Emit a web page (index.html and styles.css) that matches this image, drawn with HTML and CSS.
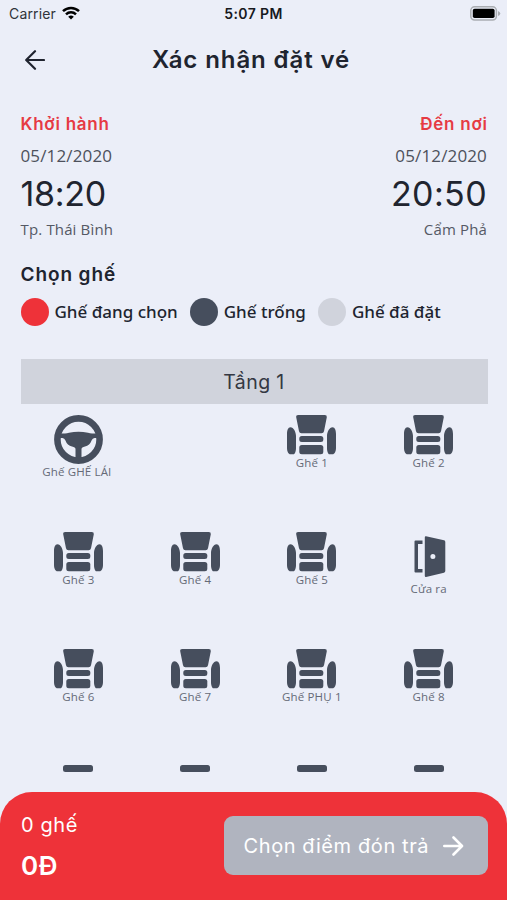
FILE: index.html
```html
<!DOCTYPE html>
<html lang="vi">
<head>
<meta charset="utf-8">
<title>Xác nhận đặt vé</title>
<link rel="stylesheet" href="styles.css">
</head>
<body>
<svg class="defs" width="0" height="0">
  <symbol id="seat" viewBox="0 0 49 40">
    <path d="M11.200 0h26.600q2.300 0 2 2.300L37 16.300q-.4 2-2.400 2H14.400q-2 0-2.400-2L9.200 2.300Q8.900 0 11.200 0z"/>
    <rect x="12.300" y="21" width="24" height="6" rx="2.500"/>
    <rect x="12.300" y="30" width="24" height="9.300" rx="2.500"/>
    <path d="M3.500 12.300C6.500 12.300 9 17 9 21v12c0 3-1 6.300-2.500 6.300H3.500C1.500 39.300 0 36.500 0 33V19c0-3.500 1-6.700 3.500-6.700zM45.500 12.300C42.500 12.300 40 17 40 21v12c0 3 1 6.300 2.500 6.300h3c2 0 3.500-2.800 3.500-6.300V19c0-3.500-1-6.700-3.500-6.700z"/>
  </symbol>
</svg>
<main class="screen">
  <div class="status">
    <div class="carrier"><span>Carrier</span>
      <svg width="18" height="14" viewBox="0 0 18 14" fill="none" stroke="#000" stroke-width="2.500"><path d="M1 5.200C5.500.8 12.500.8 17 5.200M4 8.300c2.800-2.700 7.200-2.700 10 0"/><path d="M9 13.500 6.200 10.700q2.800-2.400 5.600 0z" fill="#000" stroke="none"/></svg>
    </div>
    <div class="clock">5:07 PM</div>
    <svg class="battery" width="31" height="15" viewBox="0 0 31 15"><rect x=".8" y=".8" width="25.600" height="13.200" rx="3.800" fill="none" stroke="#aaadb2" stroke-width="1.500"/><rect x="2.800" y="2.800" width="21.800" height="9.200" rx="1.800"/><path d="M28 5v5q2.300-1 2.300-2.500T28 5z" fill="#aaadb2"/></svg>
  </div>
  <header class="header">
    <svg width="20" height="20" viewBox="0 0 20 20" fill="none" stroke="#20242f" stroke-width="2.200" stroke-linecap="round" stroke-linejoin="round"><path d="M19 10H1.500M10 1.200 1.200 10l8.800 8.800"/></svg>
    <h1>Xác nhận đặt vé</h1>
  </header>
  <section class="trip">
    <div class="stop">
      <div class="stop-title">Khởi hành</div>
      <div class="date">05/12/2020</div>
      <div class="time depart">18:20</div>
      <div class="place">Tp. Thái Bình</div>
    </div>
    <div class="stop right">
      <div class="stop-title">Đến nơi</div>
      <div class="date">05/12/2020</div>
      <div class="time">20:50</div>
      <div class="place">Cẩm Phả</div>
    </div>
  </section>
  <h2>Chọn ghế</h2>
  <div class="legend">
    <div class="key"><i class="dot picked"></i>Ghế đang chọn</div>
    <div class="key"><i class="dot free"></i>Ghế trống</div>
    <div class="key"><i class="dot booked"></i>Ghế đã đặt</div>
  </div>
  <div class="floor"><span>Tầng 1</span></div>
  <div class="seats">
    <div class="cell">
      <svg width="49" height="49" viewBox="0 0 49 49"><circle cx="24.500" cy="24.500" r="21.100" fill="none" stroke="#464e5d" stroke-width="6.600"/><path d="M4 18.500h7q2-.2 4-.8 9.500-2 19 0 2 .6 4 .8h7V23h-4.500q-2 .2-2.800 2.200-2 5.300-6.700 6.400-3.500.8-3.500 2.400v9h-6v-9q0-1.600-3.500-2.400-4.700-1.100-6.700-6.400-.8-2-2.800-2.200H4z"/></svg>
      <span class="wide-label">Ghế GHẾ LÁI</span>
    </div>
    <div class="cell"></div>
    <div class="cell"><svg width="49" height="40"><use href="#seat"/></svg><span>Ghế 1</span></div>
    <div class="cell"><svg width="49" height="40"><use href="#seat"/></svg><span>Ghế 2</span></div>
    <div class="cell"><svg width="49" height="40"><use href="#seat"/></svg><span>Ghế 3</span></div>
    <div class="cell"><svg width="49" height="40"><use href="#seat"/></svg><span>Ghế 4</span></div>
    <div class="cell"><svg width="49" height="40"><use href="#seat"/></svg><span>Ghế 5</span></div>
    <div class="cell">
      <svg width="49" height="49" viewBox="0 0 49 49"><path d="M18.500 8.500h-7q-1 0-1 1v30q0 1 1 1h7V37H14V12h4.500z"/><path fill-rule="evenodd" d="M22 4.200 40 8.300q1.300.3 1.300 1.700v29q0 1.400-1.300 1.700L22 45q-1.200.2-1.200-1.200V5.400Q20.800 4 22 4.200zM28.900 22a2.500 2.500 0 1 0 0 5 2.500 2.500 0 0 0 0-5z"/></svg>
      <span>Cửa ra</span>
    </div>
    <div class="cell"><svg width="49" height="40"><use href="#seat"/></svg><span>Ghế 6</span></div>
    <div class="cell"><svg width="49" height="40"><use href="#seat"/></svg><span>Ghế 7</span></div>
    <div class="cell"><svg width="49" height="40"><use href="#seat"/></svg><span>Ghế PHỤ 1</span></div>
    <div class="cell"><svg width="49" height="40"><use href="#seat"/></svg><span>Ghế 8</span></div>
    <div class="cell"><i class="edge"></i></div>
    <div class="cell"><i class="edge"></i></div>
    <div class="cell"><i class="edge"></i></div>
    <div class="cell"><i class="edge"></i></div>
  </div>
  <footer class="footer">
    <div class="summary">
      <div class="count">0 ghế</div>
      <div class="total">0Đ</div>
    </div>
    <button class="next"><span>Chọn điểm đón trả</span>
      <svg width="21" height="20" viewBox="0 0 21 20" fill="none" stroke="#fff" stroke-width="2.600" stroke-linecap="round" stroke-linejoin="round"><path d="M1.300 10h17.500M10.500 1.500 19 10l-8.500 8.500"/></svg>
    </button>
  </footer>
</main>
</body>
</html>
```
FILE: styles.css
```css
* { box-sizing: border-box; }
body { margin: 0; background: #ebeef8; color: #20242f; font-family: Inter, "Noto Sans", sans-serif; }
.defs { display: block; height: 0; }
.screen { width: 507px; height: 900px; display: flex; flex-direction: column; overflow: hidden; }
.status { height: 28px; flex: none; padding: 0 6px 0 9px; display: grid; grid-template-columns: 1fr auto 1fr; align-items: center; color: #17191e; font-size: 14px; line-height: 28px; }
.carrier { display: flex; align-items: center; gap: 6px; color: #30333a; letter-spacing: .15px; }
.carrier svg { margin-top: -2px; }
.clock { margin-right: 3px; font-weight: 600; letter-spacing: .4px; }
.battery { justify-self: end; margin-top: -2px; }
.header { height: 63px; flex: none; padding: 0 25px; display: grid; grid-template-columns: 20px 1fr 20px; align-items: center; }
h1 { margin: 0 0 0 -5px; text-align: center; font-size: 24px; line-height: 30px; font-weight: 600; letter-spacing: .9px; }
.trip { flex: none; display: flex; justify-content: space-between; padding: 22px 20px 0 20.500px; }
.stop { display: flex; flex-direction: column; align-items: flex-start; }
.right { align-items: flex-end; }
.stop-title { margin-right: -.7px; color: #e63a43; font-size: 17px; line-height: 22px; font-weight: 600; letter-spacing: .75px; }
.date { margin-top: 10px; color: #4d515c; font: 17px/22px "Open Sans", "Noto Sans", sans-serif; letter-spacing: .15px; }
.time { margin-top: 6px; font-size: 34px; line-height: 42px; letter-spacing: .4px; }
.depart { letter-spacing: -.3px; }
.place { margin-top: 4px; color: #555965; font: 15px/20px "Open Sans", "Noto Sans", sans-serif; letter-spacing: .15px; }
h2 { flex: none; margin: 24px 20px 0 20.500px; font-size: 19px; line-height: 24px; font-weight: 600; letter-spacing: .9px; }
.legend { flex: none; margin: 10px 20px 0 20.500px; height: 30px; display: flex; align-items: center; gap: 12px; font: 500 17px/30px "Noto Sans", sans-serif; }
.key { display: flex; align-items: center; gap: 6px; white-space: nowrap; }
.dot { width: 28px; height: 28px; border-radius: 50%; }
.picked { background: #ee3239; }
.free { background: #464e5d; }
.booked { background: #d0d3dc; }
.floor { flex: none; height: 45px; margin: 32px 19.500px 0 20.500px; background: #d0d3dc; display: flex; align-items: center; justify-content: center; color: #343843; font-size: 19.500px; letter-spacing: .4px; }
.seats { flex: 1; min-height: 0; padding: 11px 20px 0; display: grid; grid-template-columns: repeat(4, 1fr); grid-auto-rows: 116.750px; overflow: hidden; }
.cell { display: flex; flex-direction: column; align-items: center; fill: #464e5d; color: #656a77; font: 11.500px/16px "Open Sans", "Noto Sans", sans-serif; letter-spacing: .15px; }
.cell svg { display: block; flex: none; }
.wide-label { margin-left: -3px; }
.edge { width: 30px; height: 7px; border-radius: 2.500px; background: #464e5d; }
.footer { flex: none; height: 108px; background: #ee3239; border-radius: 32px 32px 0 0; padding: 24px 19.500px 0 21px; display: flex; justify-content: space-between; color: #fff; }
.count { margin-top: -3px; font-size: 20px; line-height: 24px; letter-spacing: .6px; }
.total { margin-top: 12px; font-size: 26px; line-height: 34px; font-weight: 600; letter-spacing: .5px; }
.next { width: 264px; height: 59px; padding: 0 24px 0 20px; border: 0; border-radius: 9px; background: #b0b4bf; color: #fff; display: flex; align-items: center; justify-content: space-between; font: 20px Inter, "Noto Sans", sans-serif; letter-spacing: .6px; }
```
